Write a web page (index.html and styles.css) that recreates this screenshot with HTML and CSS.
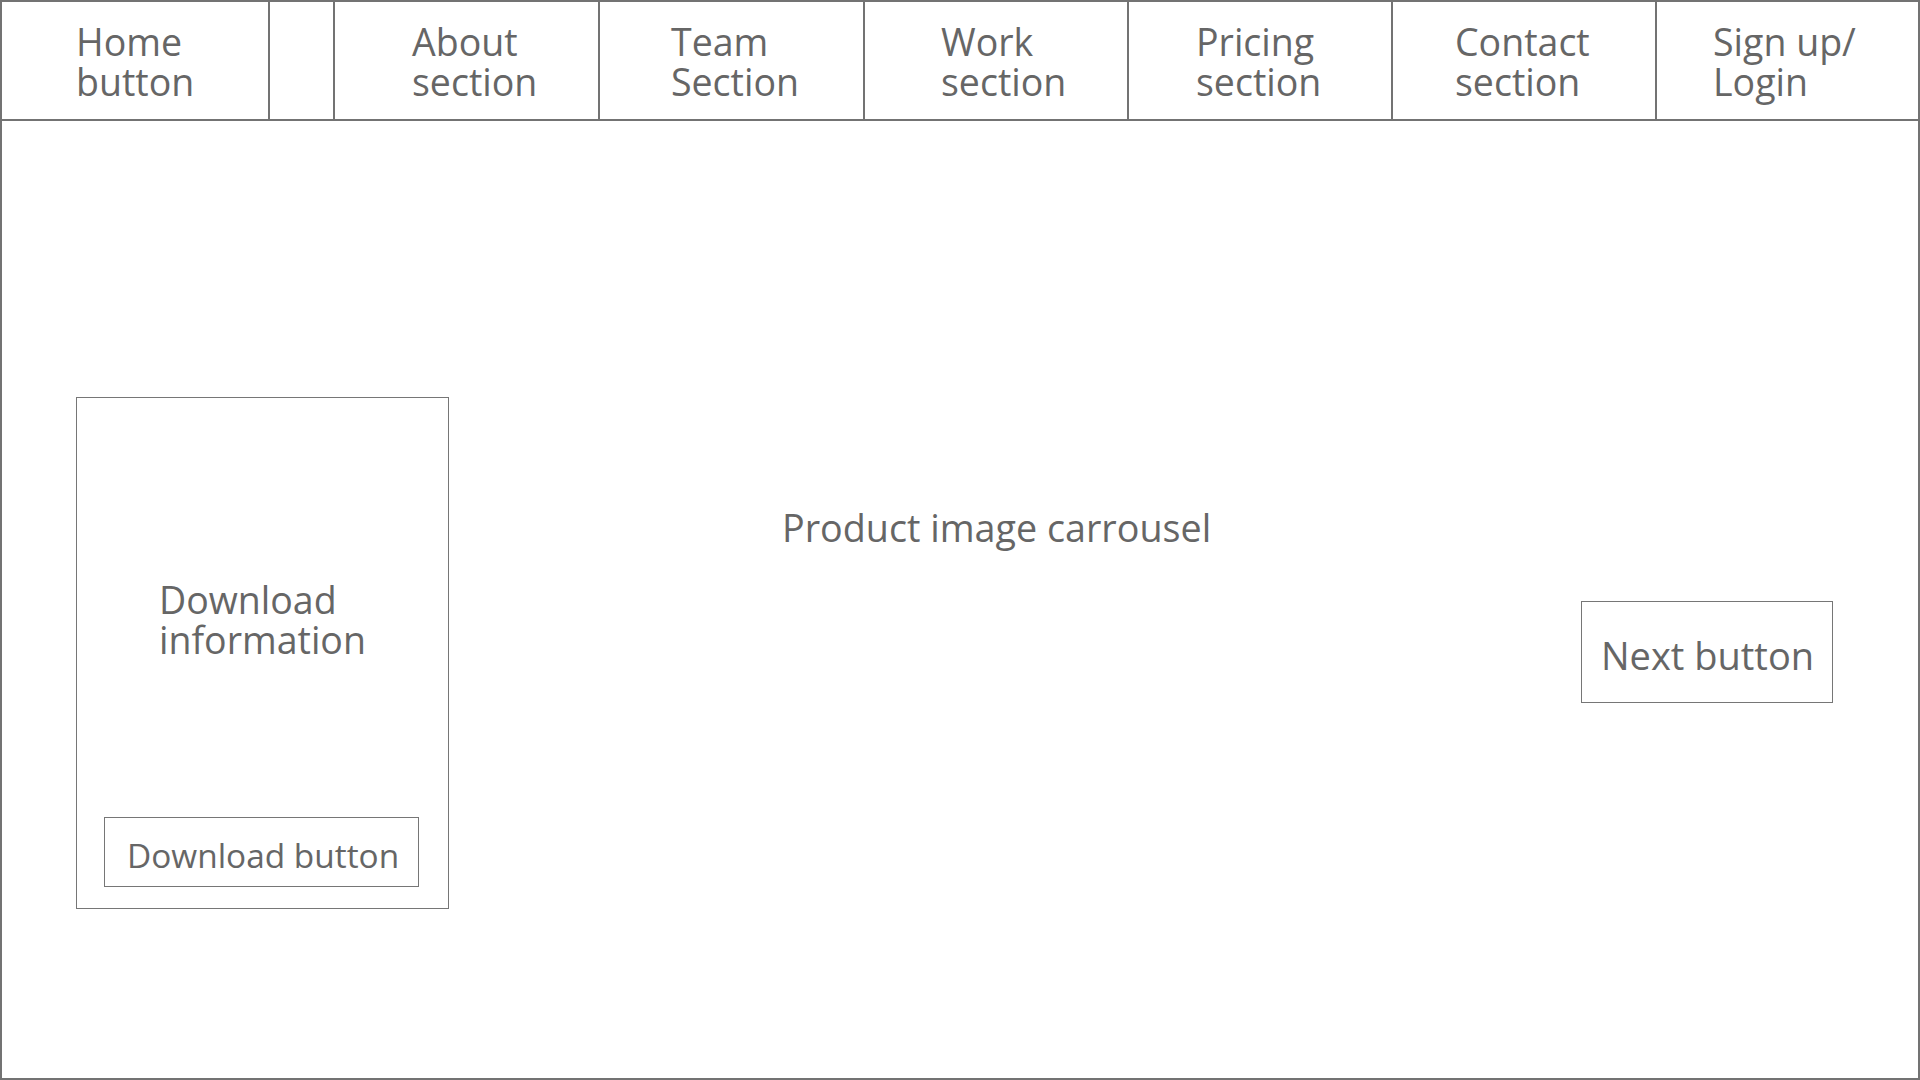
FILE: index.html
```html
<!DOCTYPE html>
<html lang="en">
<head>
<meta charset="utf-8">
<title>Wireframe</title>
<link rel="stylesheet" href="styles.css">
</head>
<body>
<div class="page">
  <nav class="nav">
    <div class="nav-cell nav-home">Home<br>button</div>
    <div class="nav-cell nav-spacer"></div>
    <div class="nav-cell nav-about">About<br>section</div>
    <div class="nav-cell nav-team">Team<br>Section</div>
    <div class="nav-cell nav-work">Work<br>section</div>
    <div class="nav-cell nav-pricing">Pricing<br>section</div>
    <div class="nav-cell nav-contact">Contact<br>section</div>
    <div class="nav-cell nav-sign">Sign up/<br>Login</div>
  </nav>
  <main class="main">
    <section class="download-card">
      <div class="download-info">Download<br>information</div>
      <div class="download-btn">Download button</div>
    </section>
    <div class="carousel">
      <div class="carousel-label">Product image carrousel</div>
    </div>
    <div class="next-btn">Next button</div>
  </main>
</div>
</body>
</html>
```

FILE: styles.css
```css
* { box-sizing: border-box; }

html, body {
  margin: 0;
  padding: 0;
  background: #ffffff;
}

body {
  font-family: "Open Sans", "Noto Sans", "Liberation Sans", sans-serif;
  color: #666666;
}

.page {
  width: 1920px;
  height: 1080px;
  border: 2px solid #737373;
  display: flex;
  flex-direction: column;
  overflow: hidden;
}

.nav {
  height: 119px;
  flex: none;
  display: grid;
  grid-template-columns: 266px 65px 265px 265px 264px 264px 264px 263px;
  border-bottom: 2px solid #737373;
}

.nav-cell {
  display: flex;
  align-items: center;
  font-size: 37.5px;
  line-height: 40px;
  padding-top: 2px;
  border-left: 2px solid #737373;
  white-space: nowrap;
}

.nav-home { border-left: none; padding-left: 74px; }
.nav-about { padding-left: 77px; }
.nav-team { padding-left: 71px; }
.nav-work { padding-left: 76px; }
.nav-pricing { padding-left: 67px; }
.nav-contact { padding-left: 62px; }
.nav-sign { padding-left: 56px; }

.main {
  flex: 1;
  display: grid;
  grid-template-columns: 373px 1fr 252px;
  align-items: start;
  padding: 0 85px 0 74px;
}

.download-card {
  margin-top: 276px;
  height: 512px;
  border: 1px solid #767676;
  padding-top: 182px;
  display: flex;
  flex-direction: column;
  align-items: flex-start;
}

.download-info {
  padding-left: 82px;
  font-size: 37.5px;
  line-height: 40px;
}

.download-btn {
  margin-top: 157px;
  margin-left: 27px;
  width: 315px;
  height: 70px;
  border: 1px solid #767676;
  display: flex;
  align-items: center;
  padding: 6px 0 0 22px;
  font-size: 33.4px;
  line-height: 40px;
  white-space: nowrap;
}

.carousel {
  padding: 387px 0 0 333px;
}

.carousel-label {
  font-size: 37.7px;
  line-height: 40px;
  white-space: nowrap;
}

.next-btn {
  margin-top: 480px;
  width: 252px;
  height: 102px;
  border: 1px solid #767676;
  display: flex;
  align-items: center;
  padding: 5px 0 0 19px;
  font-size: 38px;
  line-height: 40px;
  white-space: nowrap;
}
```
